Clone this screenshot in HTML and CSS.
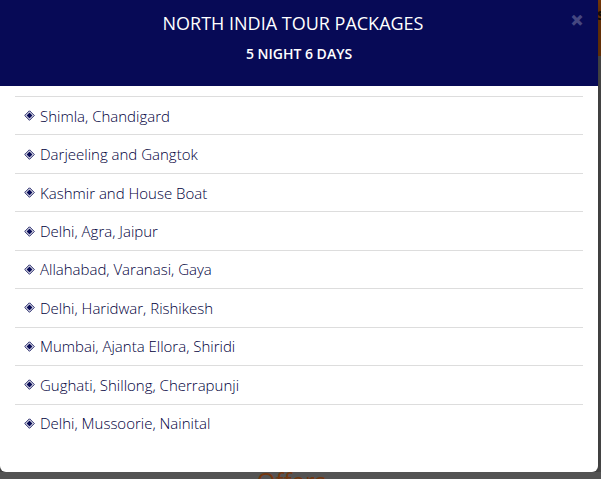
FILE: index.html
```html
<!DOCTYPE html>
<html lang="en">
<head>
<meta charset="utf-8">
<meta name="viewport" content="width=device-width, initial-scale=1">
<title>North India Tour Packages</title>
<link rel="stylesheet" href="styles.css">
</head>
<body>
<div class="page">
  <div class="page-banner"><span>s</span></div>
  <h2 class="page-heading">Offers</h2>
</div>
<div class="modal" role="dialog" aria-labelledby="modal-title">
  <header class="modal-header">
    <button class="close" type="button" aria-label="Close">×</button>
    <h4 class="modal-title" id="modal-title">NORTH INDIA TOUR PACKAGES</h4>
    <p class="modal-subtitle">5 NIGHT 6 DAYS</p>
  </header>
  <div class="modal-body">
    <ul class="tours">
      <li><svg class="mark" viewBox="0 0 11 11" aria-hidden="true"><path class="ring" d="M5.5.8 10.2 5.5 5.5 10.2.8 5.5z"/><path class="core" d="M5.5 2.5 8.5 5.5 5.5 8.5 2.5 5.5z"/></svg>Shimla, Chandigard</li>
      <li><svg class="mark" viewBox="0 0 11 11" aria-hidden="true"><path class="ring" d="M5.5.8 10.2 5.5 5.5 10.2.8 5.5z"/><path class="core" d="M5.5 2.5 8.5 5.5 5.5 8.5 2.5 5.5z"/></svg>Darjeeling and Gangtok</li>
      <li><svg class="mark" viewBox="0 0 11 11" aria-hidden="true"><path class="ring" d="M5.5.8 10.2 5.5 5.5 10.2.8 5.5z"/><path class="core" d="M5.5 2.5 8.5 5.5 5.5 8.5 2.5 5.5z"/></svg>Kashmir and House Boat</li>
      <li><svg class="mark" viewBox="0 0 11 11" aria-hidden="true"><path class="ring" d="M5.5.8 10.2 5.5 5.5 10.2.8 5.5z"/><path class="core" d="M5.5 2.5 8.5 5.5 5.5 8.5 2.5 5.5z"/></svg>Delhi, Agra, Jaipur</li>
      <li><svg class="mark" viewBox="0 0 11 11" aria-hidden="true"><path class="ring" d="M5.5.8 10.2 5.5 5.5 10.2.8 5.5z"/><path class="core" d="M5.5 2.5 8.5 5.5 5.5 8.5 2.5 5.5z"/></svg>Allahabad, Varanasi, Gaya</li>
      <li><svg class="mark" viewBox="0 0 11 11" aria-hidden="true"><path class="ring" d="M5.5.8 10.2 5.5 5.5 10.2.8 5.5z"/><path class="core" d="M5.5 2.5 8.5 5.5 5.5 8.5 2.5 5.5z"/></svg>Delhi, Haridwar, Rishikesh</li>
      <li><svg class="mark" viewBox="0 0 11 11" aria-hidden="true"><path class="ring" d="M5.5.8 10.2 5.5 5.5 10.2.8 5.5z"/><path class="core" d="M5.5 2.5 8.5 5.5 5.5 8.5 2.5 5.5z"/></svg>Mumbai, Ajanta Ellora, Shiridi</li>
      <li><svg class="mark" viewBox="0 0 11 11" aria-hidden="true"><path class="ring" d="M5.5.8 10.2 5.5 5.5 10.2.8 5.5z"/><path class="core" d="M5.5 2.5 8.5 5.5 5.5 8.5 2.5 5.5z"/></svg>Gughati, Shillong, Cherrapunji</li>
      <li><svg class="mark" viewBox="0 0 11 11" aria-hidden="true"><path class="ring" d="M5.5.8 10.2 5.5 5.5 10.2.8 5.5z"/><path class="core" d="M5.5 2.5 8.5 5.5 5.5 8.5 2.5 5.5z"/></svg>Delhi, Mussoorie, Nainital</li>
    </ul>
  </div>
</div>
</body>
</html>
```
FILE: styles.css
```css
* {
  box-sizing: border-box;
}

body {
  margin: 0;
  overflow: hidden;
  background: #535353;
  font-family: "Open Sans", "Noto Sans", sans-serif;
}

/* Dimmed page behind the dialog */
.page {
  position: absolute;
  inset: 0;
  display: flex;
  flex-direction: column;
  justify-content: space-between;
  overflow: hidden;
}

.page-banner {
  display: flex;
  justify-content: flex-end;
  height: 56px;
  margin-right: -4px;
  background: #7a3a08;
  color: #1a1008;
  font-size: 16px;
  font-weight: 700;
  line-height: 28px;
}

.page-heading {
  margin: 0 18px -19px 0;
  color: #74370f;
  font-size: 24px;
  font-weight: 400;
  line-height: 34px;
  text-align: center;
}

.modal {
  position: relative;
  margin-right: 3px;
  overflow: hidden;
  border-radius: 0 0 6px 6px;
  background: #fff;
  box-shadow: 0 5px 15px rgba(0, 0, 0, 0.5);
}

.modal-header {
  position: relative;
  padding: 10px 15px 20px;
  background: #070a56;
  color: #fff;
  text-align: center;
}

/* Right padding keeps the title clear of the close button */
.modal-title {
  margin: 0;
  padding-right: 12px;
  font-size: 18px;
  font-weight: 400;
  line-height: 26px;
}

.modal-subtitle {
  margin: 6px 0 0;
  font-size: 14px;
  font-weight: 600;
  line-height: 24px;
}

.close {
  position: absolute;
  top: 8px;
  right: 14px;
  padding: 0;
  border: 0;
  background: none;
  color: #454780;
  font: 800 24px/24px "Open Sans", sans-serif;
  cursor: pointer;
}

.modal-body {
  padding: 10px 15px 30px;
}

.tours {
  display: grid;
  grid-auto-rows: 1fr;
  height: 346px;
  margin: 0;
  padding: 0;
  list-style: none;
}

.tours li {
  display: flex;
  align-items: center;
  gap: 5px;
  padding: 0 9px;
  border-top: 1px solid #ddd;
  color: #00003c;
  font-size: 15px;
  font-weight: 300;
}

.mark {
  flex: none;
  width: 11px;
  height: 11px;
}

.ring {
  fill: none;
  stroke: #070a56;
  stroke-width: 1;
}

.core {
  fill: #070a56;
}
```
